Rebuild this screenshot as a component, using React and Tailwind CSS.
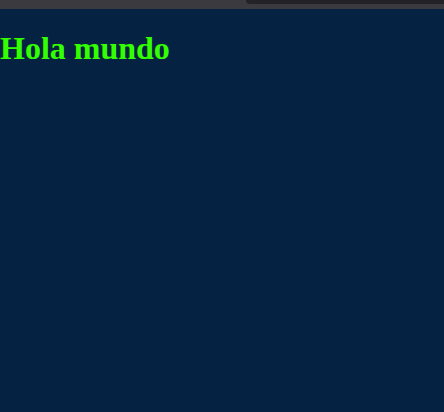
export default function App() {
  return (
    <div className="min-h-[412px] w-full bg-[#052242] flex flex-col">
      <div className="h-[9px] bg-[#3b3a3e] flex justify-end">
        <div className="h-[4px] w-[198px] bg-[#232227] rounded-bl-[6px]" />
      </div>
      <h1
        className="mt-[21px] text-[32px] font-bold leading-[normal] text-[#33ff00]"
        style={{ fontFamily: '"Liberation Serif", serif' }}
      >
        Hola mundo
      </h1>
    </div>
  );
}
